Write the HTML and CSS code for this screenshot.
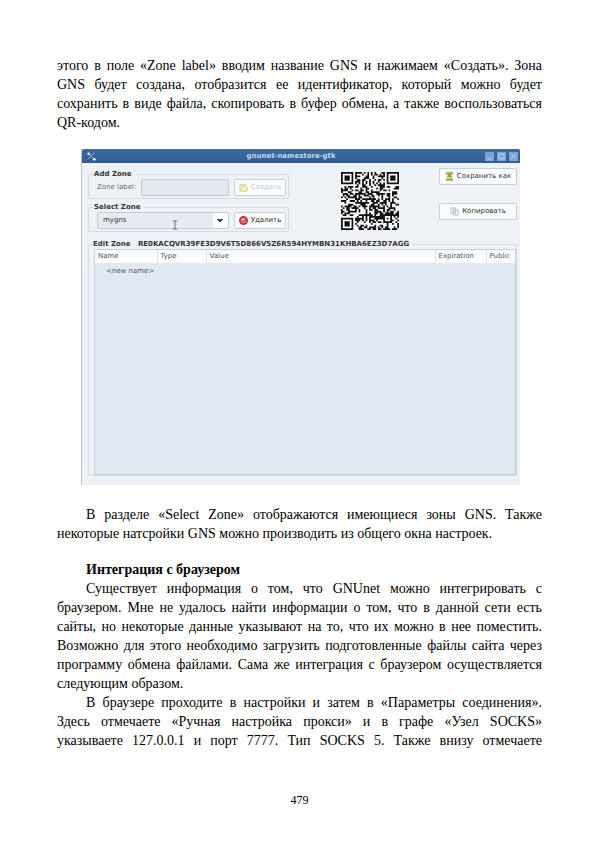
FILE: index.html
```html
<!DOCTYPE html>
<html lang="ru">
<head>
    <meta charset="UTF-8">
    <meta name="viewport" content="width=device-width, initial-scale=1.0">
    <title>GNUnet</title>
    <link rel="stylesheet" href="styles.css">
</head>
<body>
    <main class="page">
        <p class="continued">этого в поле «Zone label» вводим название GNS и нажимаем «Создать». Зона GNS будет создана, отобразится ее идентификатор, который можно будет сохранить в виде файла, скопировать в буфер обмена, а также воспользоваться QR-кодом.</p>

        <div class="window">
            <div class="title-bar">
                <svg class="app-icon" viewBox="0 0 12 12"><path d="M2 3l3 2 4 4M5 6L2 9M6 5l3-3" stroke="#a9c0dc" fill="none"/><circle cx="3" cy="3" r="1.5" fill="#e8eff7"/><circle cx="9" cy="9" r="1.5" fill="#e8eff7"/></svg>
                <span class="title">gnunet-namestore-gtk</span>
                <div class="window-buttons">
                    <button type="button" aria-label="Minimize"><svg viewBox="0 0 9 9"><path d="M2 7h5"/></svg></button>
                    <button type="button" aria-label="Maximize"><svg viewBox="0 0 9 9"><path d="M2 2h5v5h-5z"/></svg></button>
                    <button type="button" aria-label="Close"><svg viewBox="0 0 9 9"><path d="M2 2l5 5M7 2l-5 5"/></svg></button>
                </div>
            </div>

            <div class="window-body">
                <div class="top">
                    <div class="forms">
                        <fieldset class="group">
                            <legend>Add Zone</legend>
                            <div class="row">
                                <label for="zoneLabel">Zone label:</label>
                                <input type="text" id="zoneLabel" class="zone-input">
                                <button type="button" class="button" disabled>
                                    <svg viewBox="0 0 10 10"><path d="M1 2h5l3 3v4H1z" fill="#f1f3c4" stroke="#c3c984"/><path d="M3 6l5-5" stroke="#d9c860"/></svg>
                                    Создать
                                </button>
                            </div>
                        </fieldset>
                        <fieldset class="group">
                            <legend>Select Zone</legend>
                            <div class="row">
                                <select class="zone-select" aria-label="Select Zone">
                                    <option>mygns</option>
                                </select>
                                <button type="button" class="button">
                                    <svg viewBox="0 0 10 10"><circle cx="5" cy="5" r="4" fill="#e8a0a0" stroke="#c62f36" stroke-width="2"/><path d="M3 5l2 2 3-4" stroke="#a01820" fill="none"/></svg>
                                    Удалить
                                </button>
                            </div>
                            <svg class="cursor" viewBox="0 0 6 10"><path d="M1 1h4M3 1v8M1 9h4" stroke="#6b7278" fill="none"/></svg>
                        </fieldset>
                    </div>
                    <svg class="qr" id="qr" viewBox="0 0 33 33" role="img" aria-label="QR"></svg>
                    <div class="actions">
                        <button type="button" class="button">
                            <svg viewBox="0 0 10 10"><path d="M1 0h8v3H1zM2 4h6v2H2zM1 7h8v3H1z" fill="#a9b94a"/><path d="M3 2h4l-2 4z" fill="#7f9138"/></svg>
                            Сохранить как
                        </button>
                        <button type="button" class="button">
                            <svg viewBox="0 0 10 10"><path d="M1 1h5v6H1zM4 3h5v6H4z" fill="#edf0f2" stroke="#b9bfc4"/></svg>
                            Копировать
                        </button>
                    </div>
                </div>

                <fieldset class="group records">
                    <legend>Edit Zone &nbsp;&nbsp;RE0KACQVR39FE3D9V6T5D866V5Z6R594HYMBN31KHBA6EZ3D7AGG</legend>
                    <div class="table-box">
                        <table>
                            <thead>
                                <tr><th class="name">Name</th><th class="type">Type</th><th>Value</th><th class="expiration">Expiration</th><th class="public">Public</th></tr>
                            </thead>
                            <tbody>
                                <tr><td colspan="5">&lt;new name&gt;</td></tr>
                            </tbody>
                        </table>
                    </div>
                </fieldset>
            </div>
        </div>

        <p>В разделе «Select Zone» отображаются имеющиеся зоны GNS. Также некоторые натсройки GNS можно производить из общего окна настроек.</p>

        <h2>Интеграция с браузером</h2>
        <p>Существует информация о том, что GNUnet можно интегрировать с браузером. Мне не удалось найти информации о том, что в данной сети есть сайты, но некоторые данные указывают на то, что их можно в нее поместить. Возможно для этого необходимо загрузить подготовленные файлы сайта через программу обмена файлами. Сама же интеграция с браузером осуществляется следующим образом.</p>
        <p class="last">В браузере проходите в настройки и затем в «Параметры соединения». Здесь отмечаете «Ручная настройка прокси» и в графе «Узел SOCKS» указываете 127.0.0.1 и порт 7777. Тип SOCKS 5. Также внизу отмечаете</p>

        <footer>479</footer>
    </main>
    <script src="qr.js"></script>
</body>
</html>
```
FILE: styles.css
```css
* {
    box-sizing: border-box;
}

body {
    margin: 0;
    background-color: #fff;
    color: #000;
    font-family: "Liberation Serif", "Times New Roman", serif;
    font-size: 14px;
    line-height: 19px;
}

.page {
    padding: 56px 58px 0 57px;
}

p {
    margin: 0;
    text-align: justify;
    text-indent: 29px;
}

.continued {
    text-indent: 0;
}

.last {
    text-align-last: justify;
}

h2 {
    margin: 17px 0 0;
    font-size: 14px;
    text-indent: 29px;
}

footer {
    margin-top: 41px;
    font-size: 12px;
    text-align: center;
}

/* window */
.window {
    margin: 17px 22px 20px 24px;
    border-left: 1px solid #b9c3c9;
    background-color: #eef2f7;
    color: #333;
    font-family: "DejaVu Sans", sans-serif;
    font-size: 7px;
    line-height: 9px;
}

.window button,
.window input,
.window select {
    font: inherit;
    color: inherit;
}

.title-bar {
    display: flex;
    align-items: center;
    height: 14px;
    padding: 0 2px 0 4px;
    border-radius: 2px 2px 0 0;
    background: linear-gradient(#3e6ba3, #315c92);
    color: #c9d8ea;
}

.app-icon {
    width: 11px;
    height: 11px;
}

.title {
    flex: 1;
    font-weight: bold;
    text-align: center;
}

.window-buttons {
    display: flex;
    gap: 3px;
}

.window-buttons button {
    display: flex;
    width: 9px;
    height: 9px;
    padding: 0;
    border: 0;
    background-color: #7da3d3;
}

.window-buttons path {
    fill: none;
    stroke: #b9d0ec;
}

.window-body {
    padding: 5px 3px 9px 6px;
}

.top {
    display: flex;
}

.forms {
    width: 201px;
    padding-top: 2px;
}

.group {
    position: relative;
    min-width: 0;
    margin: 0 0 4px;
    padding: 0 2px 2px 1px;
    border: 1px solid #d6dce3;
    border-radius: 2px;
}

.group legend {
    margin-left: 4px;
    padding: 0 4px 0 0;
    font-weight: bold;
}

.row {
    display: flex;
    align-items: center;
    gap: 5px;
}

.row label {
    flex: 1;
    padding-left: 7px;
    color: #666;
    white-space: nowrap;
}

.zone-input {
    width: 88px;
    height: 17px;
    border: 1px solid #c3ccd5;
    border-radius: 2px;
    background-color: #e3e9f0;
}

.zone-select {
    flex: 1;
    height: 17px;
    margin-left: 7px;
    padding: 0 5px;
    border: 1px solid #c3ccd5;
    border-radius: 2px;
    appearance: none;
    background: linear-gradient(#445, #445) no-repeat right 5px top 6px / 6px 1px, linear-gradient(#445, #445) no-repeat right 6px top 7px / 4px 1px, linear-gradient(#445, #445) no-repeat right 7px top 8px / 2px 1px, linear-gradient(to left, #fbfcfd 15px, #e5ebf1 15px);
}

.button {
    display: flex;
    align-items: center;
    justify-content: center;
    gap: 3px;
    width: 52px;
    height: 17px;
    padding: 0;
    border: 1px solid #c9d0d7;
    border-radius: 2px;
    background-color: #fafbfd;
    white-space: nowrap;
}

.button svg {
    width: 9px;
    height: 9px;
}

.window .button:disabled {
    color: #c5cacf;
}

.cursor {
    position: absolute;
    top: 8px;
    left: 83px;
    width: 6px;
    height: 10px;
}

.qr {
    width: 58px;
    height: 58px;
    margin: 4px auto 0 52px;
}

.actions {
    display: flex;
    flex-direction: column;
    gap: 18px;
}

.actions .button {
    width: 78px;
}

.records {
    margin: 8px 0 0;
    padding: 0;
}

.forms .group:last-child {
    margin-bottom: 0;
}

.table-box {
    height: 226px;
    margin: 0 0 0 5px;
    border: 1px solid #c6cfd9;
    background-color: #e1e8f1;
}

table {
    width: 100%;
    border-collapse: collapse;
    table-layout: fixed;
}

th {
    height: 13px;
    padding: 0 3px;
    border-right: 1px solid #dbe1e7;
    background-color: #fafbfd;
    color: #555;
    font-weight: normal;
    text-align: left;
}

th:last-child {
    border-right: 0;
}

td {
    padding: 4px 11px;
    color: #555;
}

.name {
    width: 62px;
}

.type {
    width: 49px;
}

.expiration {
    width: 51px;
}

.public {
    width: 29px;
}
```
FILE: qr.js
```js
const SIZE = 33;
const qr = document.getElementById("qr");

function finder(x, y) {
    const d = Math.max(Math.abs(x - 3), Math.abs(y - 3));
    return d === 3 || d < 2;
}

let seed = 479;
function noise() {
    seed = (seed * 1103515245 + 12345) % 2147483648;
    return seed / 2147483648 < 0.52;
}

let path = "";
for (let y = 0; y < SIZE; y++) {
    for (let x = 0; x < SIZE; x++) {
        let dark = noise();
        const right = x > SIZE - 9;
        const bottom = y > SIZE - 9;
        const align = Math.max(Math.abs(x - 26), Math.abs(y - 26));
        if ((x < 8 || right) && (y < 8 || bottom) && !(right && bottom)) {
            const fx = right ? x - SIZE + 7 : x;
            const fy = bottom ? y - SIZE + 7 : y;
            dark = fx >= 0 && fx < 7 && fy >= 0 && fy < 7 && finder(fx, fy);
        } else if (align < 3) {
            dark = align !== 1;
        } else if (x === 6 || y === 6) {
            dark = (x + y) % 2 === 0;
        }
        if (dark) path += `M${x} ${y}h1v1h-1z`;
    }
}

qr.innerHTML = `<rect width="33" height="33" fill="#fff"/><path d="${path}" fill="#111"/>`;
```
